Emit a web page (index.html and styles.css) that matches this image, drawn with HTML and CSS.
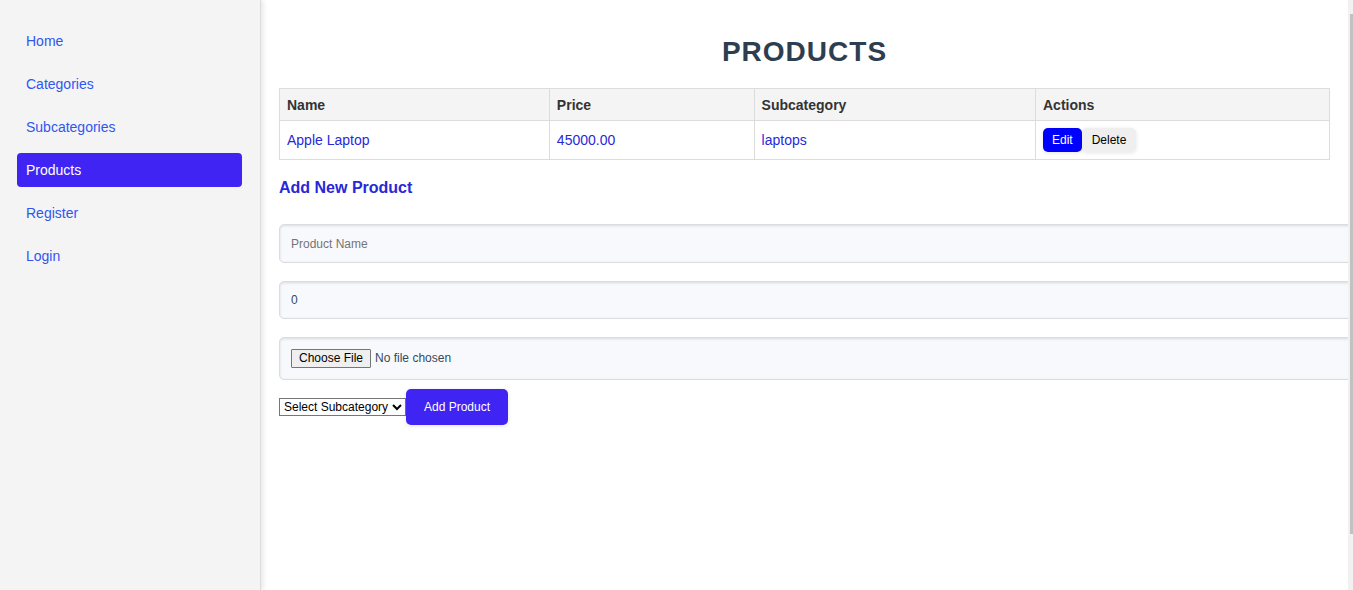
FILE: index.html
```html
<!DOCTYPE html>
<html lang="en">
<head>
<meta charset="utf-8">
<title>Products</title>
<link rel="stylesheet" href="styles.css">
</head>
<body>
<div class="layout">
  <nav class="sidebar" aria-label="Main">
    <a class="nav-link" href="#home">Home</a>
    <a class="nav-link" href="#categories">Categories</a>
    <a class="nav-link" href="#subcategories">Subcategories</a>
    <a class="nav-link active" href="#products" aria-current="page">Products</a>
    <a class="nav-link" href="#register">Register</a>
    <a class="nav-link" href="#login">Login</a>
  </nav>
  <main class="content">
    <h1 class="title">Products</h1>
    <table class="products">
      <colgroup><col class="col-name"><col class="col-price"><col class="col-sub"><col class="col-actions"></colgroup>
      <thead>
        <tr><th scope="col">Name</th><th scope="col">Price</th><th scope="col">Subcategory</th><th scope="col">Actions</th></tr>
      </thead>
      <tbody>
        <tr>
          <td>Apple Laptop</td><td>45000.00</td><td>laptops</td>
          <td><div class="actions"><button type="button" class="btn edit">Edit</button><button type="button" class="btn">Delete</button></div></td>
        </tr>
      </tbody>
    </table>
    <h2 class="subtitle">Add New Product</h2>
    <form class="form">
      <input class="field name" type="text" placeholder="Product Name" aria-label="Product Name">
      <input class="field" type="number" value="0" aria-label="Price">
      <input class="field file" type="file" aria-label="Product image">
      <div class="form-row">
        <select class="select" aria-label="Subcategory"><option>Select Subcategory</option><option>laptops</option></select>
        <button type="button" class="submit">Add Product</button>
      </div>
    </form>
  </main>
  <div class="scroll-track" aria-hidden="true"><div class="scroll-thumb"></div></div>
</div>
</body>
</html>
```

FILE: styles.css
```css
body {
  margin: 0;
  font-family: "Liberation Sans", Arial, sans-serif;
  font-size: 14px;
  line-height: 16px;
  color: #2828d8;
  background: #fff;
}

.layout {
  display: flex;
  min-height: 100vh;
}

.sidebar {
  display: flex;
  flex-direction: column;
  gap: 9px;
  box-sizing: border-box;
  flex: 0 0 261px;
  padding: 24px 18px 24px 17px;
  background: #f4f4f4;
  border-right: 1px solid #dcdce0;
  box-shadow: 2px 0 5px rgba(0, 0, 0, 0.1);
}

.nav-link {
  padding: 9px;
  border-radius: 4px;
  color: #3056f0;
  text-decoration: none;
}

.nav-link.active {
  background: #4024f4;
  color: #fff;
}

.content {
  flex: 1;
  min-width: 0;
  overflow: hidden;
  padding: 36px 18px;
}

.title {
  margin: 0 0 20px;
  font-size: 28px;
  line-height: 32px;
  letter-spacing: 1px;
  text-align: center;
  text-transform: uppercase;
  color: #2c3e50;
}

.products {
  width: 100%;
  table-layout: fixed;
  border-collapse: collapse;
}

.col-name { width: 25.7%; }
.col-price { width: 19.5%; }
.col-sub { width: 26.8%; }
.col-actions { width: 28%; }

.products th,
.products td {
  padding: 7px;
  border: 1px solid #dcdcdc;
  text-align: left;
}

.products th {
  padding: 8px 7px 7px;
  background: #f4f4f4;
  color: #333;
}

.actions {
  display: flex;
}

.btn {
  padding: 4px 10px;
  border: 0;
  border-radius: 5px;
  background: #efefef;
  color: #000;
  font: 12px/16px "Liberation Sans", Arial, sans-serif;
  box-shadow: 0 1px 4px rgba(0, 0, 0, 0.1);
}

.btn.edit {
  padding: 4px 9px;
  background: #0000ff;
  color: #fff;
}

.subtitle {
  margin: 18px 0 27px;
  font-size: 16px;
  line-height: 19px;
}

.field {
  display: block;
  width: 100%;
  margin: 0 0 18px;
  padding: 11px;
  border: 1px solid #dcdce0;
  border-radius: 5px;
  background: #f8f9fd;
  color: #34495e;
  font: 12px/14px "Liberation Sans", Arial, sans-serif;
  box-shadow: inset 0 1px 3px rgba(0, 0, 0, 0.12);
}

.field.name {
  padding-top: 12px;
}

.field.file {
  margin-bottom: 9px;
}

.field.file::file-selector-button {
  padding: 1px 7px;
  margin-right: 4px;
  border: 1px solid #767676;
  border-radius: 1px;
  background: #efefef;
  color: #000;
  font: 12px/15px "Liberation Sans", Arial, sans-serif;
}

.form-row {
  display: flex;
  align-items: center;
}

.select {
  padding: 0;
  border: 1px solid #767676;
  border-radius: 0;
  background: #fff;
  color: #000;
  font: 12px "Liberation Sans", Arial, sans-serif;
}

.submit {
  padding: 11px 18px;
  border: 0;
  border-radius: 5px;
  background: #4024f4;
  color: #fff;
  font: 12px/14px "Liberation Sans", Arial, sans-serif;
  box-shadow: 0 1px 4px rgba(0, 0, 0, 0.12);
}

.scroll-track {
  flex: 0 0 5px;
  box-sizing: border-box;
  padding: 14px 0 56px 2px;
  display: flex;
  background: #f1f1f1;
}

.scroll-thumb {
  flex: 1;
  background: #c1c1c1;
}
```
